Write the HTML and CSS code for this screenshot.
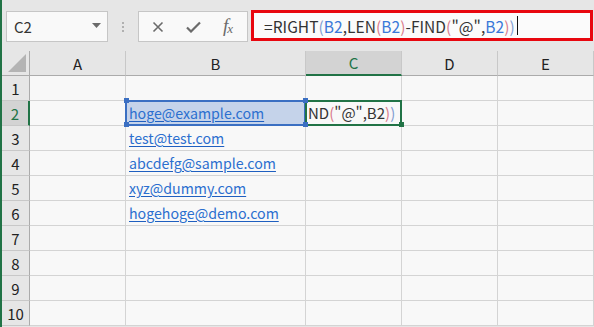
FILE: index.html
```html
<!DOCTYPE html>
<html lang="ja">
<head>
<meta charset="utf-8">
<link rel="stylesheet" href="styles.css">
</head>
<body>
<div class="app">
  <div class="toolbar">
    <div class="namebox">
      <span class="name">C2</span>
      <svg class="dd" width="9" height="5" viewBox="0 0 9 5"><path d="M0 0H9L4.5 5Z" fill="#6b6b6b"/></svg>
    </div>
    <div class="dots"><i></i><i></i><i></i></div>
    <div class="btns">
      <svg width="12" height="12" viewBox="0 0 12 12"><path d="M1.5 1.5L10.5 10.5M10.5 1.5L1.5 10.5" stroke="#6b6b6b" stroke-width="1.6"/></svg>
      <svg width="15" height="12" viewBox="0 0 15 12"><path d="M1 6.5L5 10.5L14 1.5" stroke="#6b6b6b" stroke-width="2.2" fill="none"/></svg>
      <span class="fx">f<sub>x</sub></span>
    </div>
    <div class="formula">
      <span class="ft">=RIGHT<span class="p1">(</span><span class="ref">B2</span>,LEN<span class="p2">(</span><span class="ref">B2</span><span class="p2">)</span>-FIND<span class="p2">(</span>"@",<span class="ref">B2</span><span class="p2">)</span><span class="p1">)</span></span><span class="caret"></span>
    </div>
  </div>
  <div class="grid">
    <div class="corner"><svg width="18" height="18" viewBox="0 0 18 18"><path d="M18 0V18H0Z" fill="#b4b4b4"/></svg></div>
    <div class="ch">A</div>
    <div class="ch">B</div>
    <div class="ch sel">C</div>
    <div class="ch">D</div>
    <div class="ch">E</div>

    <div class="rh">1</div><div class="c"></div><div class="c"></div><div class="c"></div><div class="c"></div><div class="c"></div>
    <div class="rh sel">2</div><div class="c"></div>
    <div class="c ref-cell"><a class="link">hoge@example.com</a><i class="h tl"></i><i class="h bl"></i><i class="h tr"></i><i class="h br"></i></div>
    <div class="c edit"><span class="etext">ND<span class="p2">(</span>"@",B2<span class="p2">)</span><span class="p1">)</span></span><i class="fh"></i></div>
    <div class="c"></div><div class="c"></div>
    <div class="rh">3</div><div class="c"></div><div class="c"><a class="link">test@test.com</a></div><div class="c"></div><div class="c"></div><div class="c"></div>
    <div class="rh">4</div><div class="c"></div><div class="c"><a class="link">abcdefg@sample.com</a></div><div class="c"></div><div class="c"></div><div class="c"></div>
    <div class="rh">5</div><div class="c"></div><div class="c"><a class="link">xyz@dummy.com</a></div><div class="c"></div><div class="c"></div><div class="c"></div>
    <div class="rh">6</div><div class="c"></div><div class="c"><a class="link">hogehoge@demo.com</a></div><div class="c"></div><div class="c"></div><div class="c"></div>
    <div class="rh">7</div><div class="c"></div><div class="c"></div><div class="c"></div><div class="c"></div><div class="c"></div>
    <div class="rh">8</div><div class="c"></div><div class="c"></div><div class="c"></div><div class="c"></div><div class="c"></div>
    <div class="rh">9</div><div class="c"></div><div class="c"></div><div class="c"></div><div class="c"></div><div class="c"></div>
    <div class="rh">10</div><div class="c"></div><div class="c"></div><div class="c"></div><div class="c"></div><div class="c"></div>
  </div>
</div>
</body>
</html>
```
FILE: styles.css
```css
* { box-sizing: border-box; }
html, body { margin: 0; padding: 0; }
body {
  width: 594px;
  height: 327px;
  overflow: hidden;
  background: #e6e6e6;
  font-family: "Noto Sans CJK JP", "Noto Sans", sans-serif;
  color: #333;
}
.app {
  border-left: 2px solid #217346;
  height: 327px;
}
.toolbar {
  height: 51px;
  display: flex;
  align-items: flex-start;
  padding-top: 10px;
}
.namebox {
  margin-top: 1px;
  margin-left: 4px;
  width: 102px;
  height: 31px;
  background: #f9f9f9;
  border: 1px solid #c6c6c6;
  display: flex;
  align-items: center;
  justify-content: space-between;
  padding: 0 6px 0 7px;
}
.name { font-size: 15px; color: #333; line-height: 1; }
.dd { margin-top: -2px; }
.dots {
  width: 30px;
  height: 31px;
  display: flex;
  flex-direction: column;
  align-items: center;
  justify-content: center;
  gap: 2px;
  margin-top: 1px;
}
.dots i { display: block; width: 2px; height: 2px; background: #b0b0b0; }
.btns {
  margin-top: 1px;
  width: 110px;
  height: 31px;
  background: #f9f9f9;
  border: 1px solid #c6c6c6;
  display: flex;
  align-items: center;
  gap: 22px;
  padding: 0 0 0 13px;
}
.fx {
  font-family: "Liberation Serif", serif;
  font-style: italic;
  font-size: 19px;
  color: #6b6b6b;
  line-height: 1;
  margin-top: -2px;
}
.fx sub { font-size: 13px; vertical-align: -1px; margin-left: -1px; }
.formula {
  margin-left: 3px;
  width: 342px;
  height: 31px;
  background: #fbfbfb;
  border: 3px solid #e8070f;
  display: flex;
  align-items: center;
  padding-left: 10px;
  font-size: 15.5px;
  white-space: nowrap;
}
.ft { letter-spacing: 0.05px; }
.ref { color: #3a78d8; }
.p1 { color: #7f9bd0; }
.p2 { color: #d97a8b; }
.caret { display: inline-block; width: 1px; height: 19px; background: #111; margin-left: 2px; }

.grid {
  display: grid;
  grid-template-columns: 28px 96px 180px 96px 96px 96px;
  grid-template-rows: 25px repeat(10, 25px);
}
.corner {
  background: #e6e6e6;
  border-right: 1px solid #ababab;
  border-bottom: 1px solid #ababab;
  display: flex;
  align-items: flex-end;
  justify-content: flex-end;
  padding: 0 3px 3px 0;
}
.ch {
  background: #e6e6e6;
  border-right: 1px solid #c8c8c8;
  border-bottom: 1px solid #ababab;
  display: flex;
  align-items: center;
  justify-content: center;
  font-size: 15px;
  color: #222;
}
.ch.sel {
  background: #d3d3d3;
  border-bottom: 2px solid #217346;
  color: #217346;
}
.rh {
  background: #e6e6e6;
  border-right: 1px solid #ababab;
  border-bottom: 1px solid #c8c8c8;
  display: flex;
  align-items: center;
  justify-content: center;
  font-size: 15px;
  color: #222;
}
.rh.sel {
  background: #d3d3d3;
  border-right: 2px solid #217346;
  color: #217346;
}
.c {
  background: #f8f8f8;
  border-right: 1px solid #d4d4d4;
  border-bottom: 1px solid #d4d4d4;
  display: flex;
  align-items: center;
  padding-left: 3px;
  position: relative;
  white-space: nowrap;
}
.link {
  color: #2b6fcf;
  text-decoration: underline;
  text-decoration-color: #1f5fc0;
  font-size: 14.2px;
  line-height: 1;
  text-underline-offset: 2px;
}
.ref-cell { background: #c5d3ea; }
.ref-cell::after {
  content: "";
  position: absolute;
  left: -1px; top: -1px; right: -1px; bottom: -1px;
  border: 2px solid #3b6fc2;
  pointer-events: none;
}
.h { position: absolute; width: 5px; height: 5px; background: #3b6fc2; z-index: 2; }
.h.tl { left: -2px; top: -3px; }
.h.bl { left: -2px; bottom: -2px; }
.h.tr { right: -3px; top: -3px; }
.h.br { right: -3px; bottom: -2px; }
.edit { padding-left: 2px; }
.edit::after {
  content: "";
  position: absolute;
  left: -1px; top: -1px; right: -1px; bottom: -1px;
  border: 2px solid #217346;
}
.etext {
  font-size: 15px;
  line-height: 1.2;
  color: #333;
}
.fh { position: absolute; right: -3px; bottom: -2px; width: 5px; height: 5px; background: #217346; z-index: 3; }
```
